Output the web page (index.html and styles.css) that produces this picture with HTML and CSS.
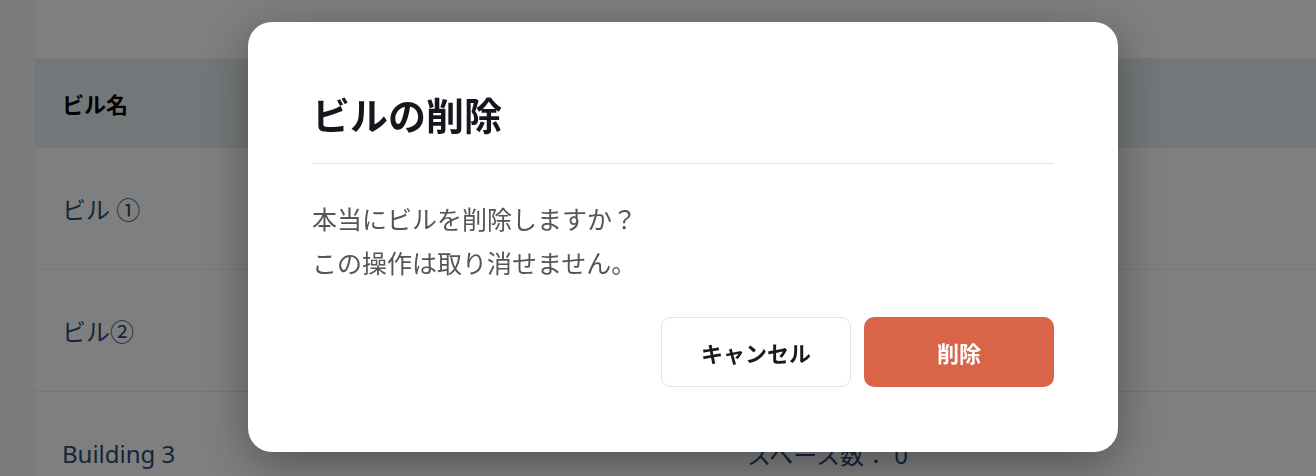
FILE: index.html
```html
<!DOCTYPE html>
<html lang="ja">
<head>
<meta charset="utf-8">
<title>ビルの削除</title>
<link rel="stylesheet" href="styles.css">
</head>
<body>
<div class="page">
  <div class="table">
    <div class="row head">
      <div class="cell">ビル名</div>
      <div class="cell"></div>
    </div>
    <div class="row">
      <div class="cell">ビル ①</div>
      <div class="cell"></div>
    </div>
    <div class="row">
      <div class="cell">ビル②</div>
      <div class="cell"></div>
    </div>
    <div class="row last">
      <div class="cell">Building 3</div>
      <div class="cell">スペース数： 0</div>
    </div>
  </div>
</div>
<div class="overlay">
  <div class="modal">
    <h2 class="modal-title">ビルの削除</h2>
    <div class="modal-body">
      <p>本当にビルを削除しますか？</p>
      <p>この操作は取り消せません。</p>
    </div>
    <div class="modal-actions">
      <button class="btn btn-cancel">キャンセル</button>
      <button class="btn btn-danger">削除</button>
    </div>
  </div>
</div>
</body>
</html>
```
FILE: styles.css
```css
html, body {
  margin: 0;
  padding: 0;
  height: 100%;
  overflow: hidden;
}
body {
  background: #f6f6f6;
  font-family: "Noto Sans", "Noto Sans CJK JP", sans-serif;
}
.page {
  padding-left: 35px;
}
.table {
  background: #ffffff;
  padding-top: 58px;
}
.row {
  display: grid;
  grid-template-columns: 685px 1fr;
  height: 122px;
  align-items: center;
  border-bottom: 1px solid #ececec;
  box-sizing: border-box;
  color: #264d73;
  font-size: 24px;
}
.row.head {
  height: 90px;
  background: #e6eff2;
  border-bottom: none;
  color: #000000;
  font-size: 22px;
  font-weight: 700;
}
.row.last {
  border-bottom: none;
}
.cell {
  padding-left: 27px;
  font-family: "Noto Sans", "Noto Sans CJK JP", sans-serif;
}
.overlay {
  position: fixed;
  inset: 0;
  background: rgba(0, 0, 0, 0.5);
  display: flex;
  align-items: center;
  justify-content: center;
  padding-left: 50px;
  padding-bottom: 2px;
}
.modal {
  width: 870px;
  box-sizing: border-box;
  background: #ffffff;
  border-radius: 24px;
  padding: 64px 64px 65px;
  box-shadow: 0 12px 48px rgba(0, 0, 0, 0.35);
}
.modal-title {
  margin: 0;
  padding-bottom: 21px;
  border-bottom: 1px solid #e4e4e4;
  font-family: "Noto Sans CJK JP", sans-serif;
  font-size: 38px;
  font-weight: 700;
  line-height: 56px;
  color: #15171c;
}
.modal-body {
  margin-top: 32px;
  font-family: "Noto Sans CJK JP", sans-serif;
  font-size: 25px;
  line-height: 44px;
  color: #555555;
}
.modal-body p {
  margin: 0;
  height: 44px;
}
.modal-actions {
  margin-top: 33px;
  display: flex;
  justify-content: flex-end;
  gap: 13px;
}
.btn {
  width: 190px;
  height: 70px;
  border-radius: 10px;
  font-family: "Noto Sans CJK JP", sans-serif;
  font-size: 22px;
  font-weight: 700;
  cursor: pointer;
}
.btn-cancel {
  background: #ffffff;
  border: 1px solid #e4e4e4;
  color: #1a1a1a;
}
.btn-danger {
  background: #d96447;
  border: none;
  color: #ffffff;
}
```
